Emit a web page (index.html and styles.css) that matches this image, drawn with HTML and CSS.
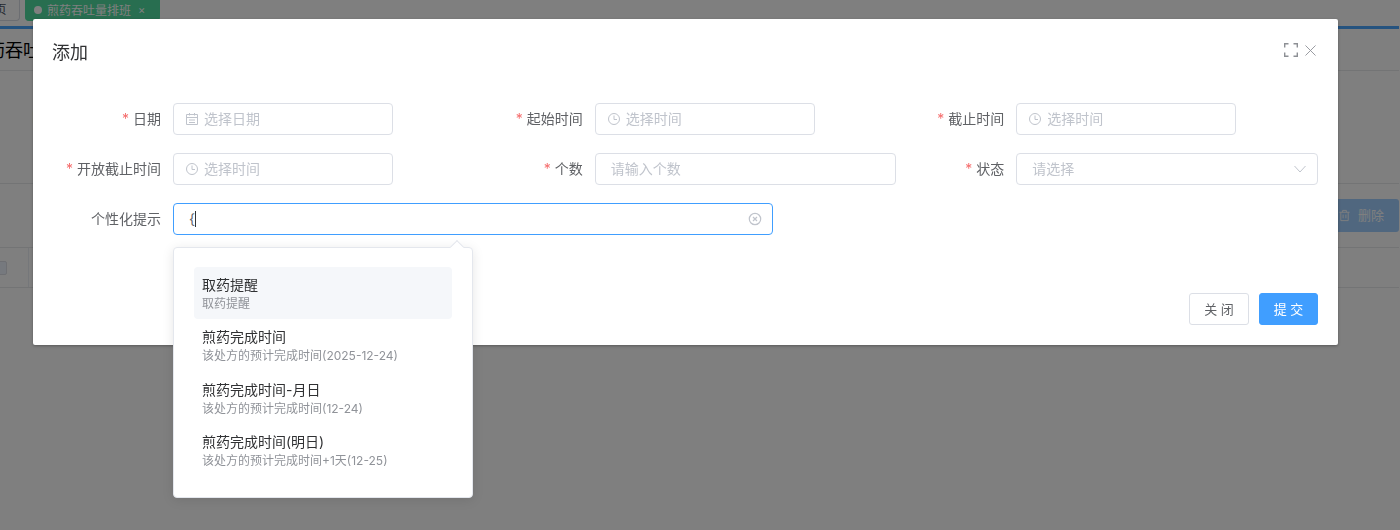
FILE: index.html
```html
<!DOCTYPE html>
<html lang="zh-CN">
<head>
<meta charset="utf-8">
<title>煎药吞吐量排班</title>
<link rel="stylesheet" href="styles.css">
</head>
<body>
<div class="page">
  <div class="tabs">
    <div class="tab">首页</div>
    <div class="tab tab-active"><span class="tab-dot"></span>煎药吞吐量排班<span class="tab-x">×</span></div>
  </div>
  <div class="accent"></div>
  <div class="page-title">煎药吞吐量排班</div>
  <div class="filter">日期</div>
  <div class="toolbar">
    <div class="btn-disabled">
      <svg class="btn-icon" viewBox="0 0 14 14"><path d="M1.5 3.5h11M5 3.5V1.5h4v2M3 3.5V12.5h8V3.5M5.5 6v4M8.5 6v4" fill="none" stroke="currentColor"/></svg>
      <span class="btn-text">删除</span>
    </div>
  </div>
  <div class="table-row">
    <div class="cell-check"><span class="checkbox"></span></div>
  </div>
</div>

<div class="overlay"></div>

<div class="modal">
  <div class="modal-head">
    <div class="modal-title">添加</div>
    <div class="modal-tools">
      <svg class="tool-full" viewBox="0 0 14 14"><path d="M.7 4.5V.7h3.8M9.5.7h3.8v3.8M13.3 9.5v3.8H9.5M4.5 13.3H.7V9.5" fill="none" stroke="#8d9095" stroke-width="1.4"/></svg>
      <svg class="tool-close" viewBox="0 0 12 12"><path d="M.5.5l11 11M11.5.5l-11 11" fill="none" stroke="#909399" stroke-width="1"/></svg>
    </div>
  </div>
  <div class="form">
    <div class="field">
      <div class="label"><span class="req">*</span>日期</div>
      <div class="input input-short">
        <svg class="prefix" viewBox="0 0 14 14"><path d="M1.5 2.5h11v10h-11zM1.5 5.5h11M4.5 1v2.5M9.5 1v2.5M4 8h6M4 10.5h6" fill="none" stroke="#c0c4cc"/></svg>
        <span class="ph">选择日期</span>
      </div>
    </div>
    <div class="field">
      <div class="label"><span class="req">*</span>起始时间</div>
      <div class="input input-short">
        <svg class="prefix" viewBox="0 0 14 14"><circle cx="7" cy="7" r="5.5" fill="none" stroke="#c0c4cc"/><path d="M7 3.5V7.5H10" fill="none" stroke="#c0c4cc"/></svg>
        <span class="ph">选择时间</span>
      </div>
    </div>
    <div class="field">
      <div class="label"><span class="req">*</span>截止时间</div>
      <div class="input input-short">
        <svg class="prefix" viewBox="0 0 14 14"><circle cx="7" cy="7" r="5.5" fill="none" stroke="#c0c4cc"/><path d="M7 3.5V7.5H10" fill="none" stroke="#c0c4cc"/></svg>
        <span class="ph">选择时间</span>
      </div>
    </div>
    <div class="field">
      <div class="label"><span class="req">*</span>开放截止时间</div>
      <div class="input input-short">
        <svg class="prefix" viewBox="0 0 14 14"><circle cx="7" cy="7" r="5.5" fill="none" stroke="#c0c4cc"/><path d="M7 3.5V7.5H10" fill="none" stroke="#c0c4cc"/></svg>
        <span class="ph">选择时间</span>
      </div>
    </div>
    <div class="field">
      <div class="label"><span class="req">*</span>个数</div>
      <div class="input input-plain"><span class="ph">请输入个数</span></div>
    </div>
    <div class="field">
      <div class="label"><span class="req">*</span>状态</div>
      <div class="input input-plain">
        <span class="ph">请选择</span>
        <svg class="suffix-arrow" viewBox="0 0 12 8"><path d="M.5 1l5.5 6 5.5-6" fill="none" stroke="#c0c4cc"/></svg>
      </div>
    </div>
    <div class="field field-wide">
      <div class="label">个性化提示</div>
      <div class="input input-focus">
        <span class="typed">{</span><span class="caret"></span>
        <svg class="suffix-clear" viewBox="0 0 14 14"><circle cx="7" cy="7" r="5.7" fill="none" stroke="#c0c4cc" stroke-width="1.2"/><path d="M5 5l4 4M9 5l-4 4" fill="none" stroke="#c0c4cc" stroke-width="1.2"/></svg>
      </div>
    </div>
  </div>
  <div class="modal-foot">
    <div class="btn">关 闭</div>
    <div class="btn btn-primary">提 交</div>
  </div>
</div>

<div class="popup">
  <span class="popup-arrow"></span>
  <div class="sug sug-active">
    <div class="sug-title">取药提醒</div>
    <div class="sug-sub">取药提醒</div>
  </div>
  <div class="sug">
    <div class="sug-title">煎药完成时间</div>
    <div class="sug-sub">该处方的预计完成时间(2025-12-24)</div>
  </div>
  <div class="sug">
    <div class="sug-title">煎药完成时间-月日</div>
    <div class="sug-sub">该处方的预计完成时间(12-24)</div>
  </div>
  <div class="sug">
    <div class="sug-title">煎药完成时间(明日)</div>
    <div class="sug-sub">该处方的预计完成时间+1天(12-25)</div>
  </div>
</div>
</body>
</html>
```

FILE: styles.css
```css
* { box-sizing: border-box; }
html, body { margin: 0; height: 100%; overflow: hidden; }
body {
  background: #fff;
  color: #303133;
  font-family: "Inter", "Noto Sans CJK SC", sans-serif;
  font-size: 14px;
}

/* page behind the dialog, scrolled slightly to the right */
.page { margin-left: -31px; width: 1430px; }
.tabs { display: flex; gap: 5px; height: 21px; padding-right: 0; }
.tab {
  width: 51px;
  height: 21px;
  border: 1px solid #d8dce5;
  border-top: 0;
  border-radius: 0 0 4px 4px;
  font-size: 12px;
  line-height: 19px;
  text-align: center;
  color: #495060;
}
.tab-active {
  display: flex;
  align-items: center;
  width: 135px;
  padding-left: 8px;
  color: #fff;
  background: #50dca0;
  border-color: #50dca0;
  white-space: nowrap;
}
.tab-dot { width: 8px; height: 8px; margin-right: 5px; border-radius: 50%; background: #fff; }
.tab-x { margin-left: 7px; font-size: 11px; }
.accent { height: 3px; margin-top: 5px; background: #4aa6ff; }
.page-title {
  height: 42px;
  padding-top: 1px;
  border-bottom: 1px solid #e6e8eb;
  font-size: 18px;
  line-height: 42px;
  color: #000;
}
.filter {
  height: 113px;
  padding: 35px 0 0 62px;
  border-bottom: 1px solid #e6e8eb;
  line-height: 22px;
  color: #606266;
}
.toolbar {
  display: flex;
  justify-content: flex-end;
  height: 64px;
  padding: 15px 0 0 0;
  border-bottom: 1px solid #e6e8eb;
}
.btn-disabled {
  display: flex;
  align-items: center;
  gap: 7px;
  width: 90px;
  height: 33px;
  padding-left: 29px;
  border-radius: 3px;
  background: #a0cfff;
  color: #fff;
  font-size: 13px;
}
.btn-icon { width: 13px; height: 13px; }
.btn-text { margin-bottom: 2px; }
.table-row { height: 40px; border-bottom: 1px solid #e6e8eb; }
.cell-check {
  display: flex;
  align-items: center;
  justify-content: flex-end;
  width: 60px;
  height: 39px;
  padding-right: 21px;
  border-right: 1px solid #ebeef5;
}
.checkbox {
  width: 14px;
  height: 14px;
  border-radius: 2px;
  background: #edf2fc;
  border: 1px solid #dcdfe6;
}

.overlay { position: fixed; inset: 0; background: rgba(0, 0, 0, .5); }

/* dialog */
.modal {
  position: absolute;
  left: 33px;
  top: 19px;
  width: 1305px;
  height: 326px;
  display: flex;
  flex-direction: column;
  padding: 0 20px;
  border-radius: 2px;
  background: #fff;
  box-shadow: 0 1px 3px rgba(0, 0, 0, .3);
}
.modal-head {
  display: flex;
  align-items: center;
  justify-content: space-between;
  height: 66px;
}
.modal-title { font-size: 18px; line-height: 24px; color: #303133; margin: 2px 0 0 -1px; }
.modal-tools { display: flex; align-items: center; gap: 7px; margin: -4px 2px 0 0; }
.tool-full { width: 14px; height: 14px; }
.tool-close { width: 11px; height: 11px; }

.form {
  display: grid;
  grid-template-columns: repeat(3, 1fr);
  row-gap: 18px;
  margin-top: 18px;
}
.field { display: flex; height: 32px; }
.field-wide { grid-column: 1 / -1; }
.label {
  flex: none;
  width: 120px;
  padding-right: 12px;
  line-height: 32px;
  text-align: right;
  color: #606266;
}
.req { margin-right: 4px; color: #f56c6c; }
.input {
  display: flex;
  align-items: center;
  height: 32px;
  border: 1px solid #dcdfe6;
  border-radius: 4px;
  background: #fff;
}
.input-short { width: 220px; padding-left: 10px; }
.input-plain { flex: 1; padding: 0 15px; justify-content: space-between; }
.input-focus { position: relative; width: 600px; padding-left: 15px; border-color: #409eff; }
.prefix { width: 14px; height: 14px; margin: 0 5px 0 1px; flex: none; }
.ph { margin-bottom: 2px; color: #c0c4cc; }
.typed { color: #606266; line-height: 20px; }
.caret { display: inline-block; width: 1px; height: 16px; margin-left: 0; background: #303133; }
.suffix-arrow { width: 12px; height: 8px; margin-right: -4px; }
.suffix-clear { position: absolute; right: 10px; top: 8px; width: 14px; height: 14px; }

.modal-foot {
  display: flex;
  justify-content: flex-end;
  gap: 10px;
  margin-top: auto;
  margin-bottom: 20px;
}
.btn {
  width: 60px;
  height: 32px;
  border: 1px solid #dcdfe6;
  border-radius: 3px;
  font-size: 13px;
  line-height: 30px;
  text-align: center;
  color: #606266;
  white-space: pre;
}
.btn-primary { width: 59px; background: #409eff; border-color: #409eff; color: #fff; }

/* suggestion popover */
.popup {
  position: absolute;
  left: 173px;
  top: 247px;
  width: 300px;
  height: 251px;
  padding: 19px 20px;
  border: 1px solid #e4e7ed;
  border-radius: 4px;
  background: #fff;
  box-shadow: 0 2px 12px rgba(0, 0, 0, .1);
}
.popup-arrow {
  position: absolute;
  left: 278px;
  top: -6px;
  width: 10px;
  height: 10px;
  background: #fff;
  border-top: 1px solid #e4e7ed;
  border-left: 1px solid #e4e7ed;
  transform: rotate(45deg);
}
.sug { height: 52.3px; padding: 8px 8px 0; border-radius: 4px; }
.sug-active { background: #f5f7fa; }
.sug-title { font-size: 14px; line-height: 20px; color: #303133; }
.sug-sub { font-size: 12px; line-height: 16px; margin-top: 1px; color: #909399; }
```
